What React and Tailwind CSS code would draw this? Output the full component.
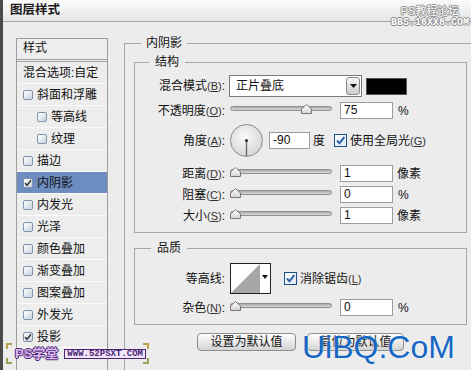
import React from 'react';

const layers = [
  { label: '混合选项:自定', box: false },
  { label: '斜面和浮雕', box: true },
  { label: '等高线', box: true, indent: true },
  { label: '纹理', box: true, indent: true },
  { label: '描边', box: true },
  { label: '内阴影', box: true, checked: true, active: true },
  { label: '内发光', box: true },
  { label: '光泽', box: true },
  { label: '颜色叠加', box: true },
  { label: '渐变叠加', box: true },
  { label: '图案叠加', box: true },
  { label: '外发光', box: true },
  { label: '投影', box: true, checked: true },
];

const ListBox = ({ checked }) => (
  <div className="w-[10px] h-[10px] shrink-0 rounded-[2px] border border-[#7f93ad] bg-linear-to-br from-[#ffffff] to-[#c9d3e0] flex items-center justify-center">
    {checked && (
      <svg width="8" height="8" viewBox="0 0 8 8">
        <path d="M1 4 L3 6.3 L7 1.2" fill="none" stroke="#333" strokeWidth="1.4" />
      </svg>
    )}
  </div>
);

const CheckBox = () => (
  <div className="w-[13px] h-[13px] shrink-0 border border-[#1c4f87] bg-linear-to-br from-[#ffffff] to-[#dfe5ee] flex items-center justify-center">
    <svg width="11" height="11" viewBox="0 0 11 11">
      <path d="M2 5.5 L4.5 8.3 L9.3 2.2" fill="none" stroke="#2a5fae" strokeWidth="2" />
    </svg>
  </div>
);

const Label = ({ text, k }) => (
  <div className="w-[90px] shrink-0 text-right whitespace-nowrap leading-[14px]">
    {text}
    {k && (
      <span className="text-[11px] text-[#333]">
        (<span className="underline">{k}</span>)
      </span>
    )}
    :
  </div>
);

const Slider = ({ pct }) => (
  <div className="relative ml-[5px] w-[102px] h-[17px] shrink-0">
    <div className="mt-[4px] h-[5px] rounded-full border border-[#8f8f8f] bg-linear-to-b from-[#a9a9a9] to-[#dadada]" />
    <svg
      className="absolute top-[2px]"
      style={{ left: Math.round(pct * 0.95) + 'px' }}
      width="11"
      height="10"
      viewBox="0 0 11 10"
    >
      <defs>
        <linearGradient id="th" x1="0" y1="0" x2="0" y2="1">
          <stop offset="0" stopColor="#ffffff" />
          <stop offset="1" stopColor="#d4d4d4" />
        </linearGradient>
      </defs>
      <path d="M5.5 0.5 L10.5 5 L10.5 9.5 L0.5 9.5 L0.5 5 Z" fill="url(#th)" stroke="#777" />
    </svg>
  </div>
);

const Field = ({ value, w = 'w-[53px]', ml = 'ml-[8px]' }) => (
  <div className={`${w} ${ml} h-[17px] shrink-0 border border-[#9c9c9c] bg-white pl-[3px] leading-[15px] text-[#111]`}>
    {value}
  </div>
);

const Row = ({ className, children }) => (
  <div className={`flex items-center ${className}`}>{children}</div>
);

export default function App() {
  return (
    <div className="relative w-[471px] h-[370px] overflow-hidden bg-[#ececec] border-l-[3px] border-[#4a4a4a] font-['Liberation_Sans','Noto_Sans_CJK_SC',sans-serif] text-[12px] text-[#111]">
      <div className="h-[22px] border-b border-[#a6a6a6] bg-linear-to-b from-[#fbfbfb] to-[#e6e6e6] pl-[7px] flex items-center font-bold text-[12.5px] text-[#1a1a1a]">
        图层样式
      </div>

      <div className="flex items-start">
        <div className="ml-[13px] mt-[16px] w-[92px] h-[340px] shrink-0 border border-[#9c9c9c] bg-[#ededed]">
          <div className="h-[23px] pl-[6px] pt-[1px] leading-[16px] border-b-[3px] border-double border-[#a3a3a3]">样式</div>
          {layers.map((l) => (
            <div
              key={l.label}
              className={`h-[22px] flex items-center border-b border-[#fafafa] whitespace-nowrap ${l.active ? 'bg-[#6d8dc0]' : ''}`}
            >
              {l.box ? (
                <>
                  <div className={l.indent ? 'ml-[20px]' : 'ml-[6px]'}>
                    <ListBox checked={l.checked} />
                  </div>
                  <span className="ml-[4px] leading-[14px]">{l.label}</span>
                </>
              ) : (
                <span className="ml-[6px] leading-[14px]">{l.label}</span>
              )}
            </div>
          ))}
        </div>

        <fieldset className="ml-[16px] mt-[14px] w-[355px] shrink-0 border border-[#a6a6a6] pl-[9px] pt-[5px] pb-[40px] min-w-0">
          <legend className="ml-[7px] px-[5px] leading-[14px]">内阴影</legend>

          <fieldset className="w-[333px] border border-[#a6a6a6] pb-[8px] min-w-0">
            <legend className="ml-[14px] px-[6px] leading-[14px]">结构</legend>

            <Row className="mt-[6px] h-[22px]">
              <Label text="混合模式" k="B" />
              <div className="ml-[4px] w-[133px] h-[22px] shrink-0 border border-[#7a7a7a] bg-white flex items-center">
                <span className="flex-1 pl-[6px] leading-[14px]">正片叠底</span>
                <div className="mr-[1px] w-[14px] h-[18px] rounded-[3px] border border-[#8a8a8a] bg-linear-to-b from-[#f6f6f6] to-[#cdcdcd] flex items-center justify-center">
                  <svg width="7" height="4" viewBox="0 0 7 4">
                    <path d="M0 0 L7 0 L3.5 4 Z" fill="#111" />
                  </svg>
                </div>
              </div>
              <div className="ml-[4px] w-[41px] h-[17px] bg-black border border-[#555]" />
            </Row>

            <Row className="mt-[5px] h-[17px]">
              <Label text="不透明度" k="O" />
              <Slider pct={75} />
              <Field value="75" />
              <span className="ml-[5px] leading-[14px]">%</span>
            </Row>

            <Row className="mt-[5px] h-[33px]">
              <Label text="角度" k="A" />
              <svg className="ml-[5px] shrink-0" width="33" height="33" viewBox="0 0 33 33">
                <defs>
                  <radialGradient id="dial" cx="0.45" cy="0.4" r="0.6">
                    <stop offset="0" stopColor="#fbfbfb" />
                    <stop offset="1" stopColor="#d6d6d6" />
                  </radialGradient>
                </defs>
                <circle cx="16.5" cy="16.5" r="16" fill="url(#dial)" stroke="#8a8a8a" />
                <line x1="16.5" y1="16.5" x2="16.5" y2="32" stroke="#6a6a6a" strokeWidth="1.4" />
                <circle cx="16.5" cy="16.5" r="1.6" fill="#333" />
              </svg>
              <Field value="-90" w="w-[41px]" ml="ml-[6px]" />
              <span className="ml-[3px] leading-[14px]">度</span>
              <div className="ml-[9px]">
                <CheckBox />
              </div>
              <span className="ml-[3px] leading-[14px] whitespace-nowrap">
                使用全局光
                <span className="text-[11px] text-[#333]">
                  (<span className="underline">G</span>)
                </span>
              </span>
            </Row>

            <Row className="mt-[8px] h-[17px]">
              <Label text="距离" k="D" />
              <Slider pct={0} />
              <Field value="1" />
              <span className="ml-[4px] leading-[14px]">像素</span>
            </Row>

            <Row className="mt-[4px] h-[17px]">
              <Label text="阻塞" k="C" />
              <Slider pct={0} />
              <Field value="0" />
              <span className="ml-[5px] leading-[14px]">%</span>
            </Row>

            <Row className="mt-[4px] h-[17px]">
              <Label text="大小" k="S" />
              <Slider pct={0} />
              <Field value="1" />
              <span className="ml-[4px] leading-[14px]">像素</span>
            </Row>
          </fieldset>

          <fieldset className="mt-[8px] w-[333px] border border-[#a6a6a6] pb-[8px] min-w-0">
            <legend className="ml-[16px] px-[6px] leading-[14px]">品质</legend>

            <Row className="mt-[8px] h-[31px]">
              <Label text="等高线" />
              <div className="ml-[5px] w-[41px] h-[31px] shrink-0 border border-[#222] bg-white flex">
                <svg width="29" height="29" viewBox="0 0 29 29">
                  <polygon points="0,29 29,0 29,29" fill="#a6a6a6" />
                </svg>
                <div className="flex-1 flex justify-center pt-[11px]">
                  <svg width="6" height="4" viewBox="0 0 6 4">
                    <path d="M0 0 L6 0 L3 4 Z" fill="#111" />
                  </svg>
                </div>
              </div>
              <div className="ml-[13px]">
                <CheckBox />
              </div>
              <span className="ml-[3px] leading-[14px] whitespace-nowrap">
                消除锯齿
                <span className="text-[11px] text-[#333]">
                  (<span className="underline">L</span>)
                </span>
              </span>
            </Row>

            <Row className="mt-[5px] h-[17px]">
              <Label text="杂色" k="N" />
              <Slider pct={0} />
              <Field value="0" />
              <span className="ml-[5px] leading-[14px]">%</span>
            </Row>
          </fieldset>

          <div className="mt-[8px] flex">
            <div className="ml-[63px] w-[99px] h-[18px] rounded-[4px] border border-[#8e8e8e] bg-linear-to-b from-[#ffffff] to-[#d4d4d4] flex items-center justify-center leading-[14px]">
              设置为默认值
            </div>
            <div className="ml-[11px] w-[97px] h-[18px] rounded-[4px] border border-[#8e8e8e] bg-linear-to-b from-[#ffffff] to-[#d4d4d4] flex items-center justify-center leading-[14px]">
              复位为默认值
            </div>
          </div>
        </fieldset>
      </div>

      {/* watermarks */}
      <div className="absolute top-[6px] left-[384px] w-[86px] flex flex-col items-center leading-[11px] text-white [text-shadow:1px_0_#8a8a8a,-1px_0_#8a8a8a,0_1px_#8a8a8a,0_-1px_#8a8a8a]">
        <span className="text-[11px]">PS教程论坛</span>
        <span className="text-[10px] font-['Liberation_Mono',monospace] font-bold">BBS.16XX8.COM</span>
      </div>

      <div className="absolute left-[299px] top-[331px] text-[32px] leading-none text-[#1767c4] font-['Liberation_Sans',sans-serif] whitespace-nowrap [text-shadow:0_0_2px_#fff]">
        UiBQ.CoM
      </div>

      <div className="absolute left-[3px] top-[343px] w-[143px] h-[21px]">
        <div className="absolute left-0 top-0 w-[6px] h-[6px] border-l-2 border-t-2 border-[#b8a24a]" />
        <div className="absolute left-0 bottom-0 w-[6px] h-[6px] border-l-2 border-b-2 border-[#8fa65a]" />
        <div className="absolute right-0 top-0 w-[6px] h-[6px] border-r-2 border-t-2 border-[#b8a24a]" />
        <div className="absolute right-0 bottom-0 w-[6px] h-[6px] border-r-2 border-b-2 border-[#8fa65a]" />
        <div className="flex items-center h-full pl-[9px]">
          <span className="text-[13px] font-bold leading-none text-[#d9bdf0] [text-shadow:1px_0_#4e2474,-1px_0_#4e2474,0_1px_#4e2474,0_-1px_#4e2474]">
            PS学堂
          </span>
          <span className="ml-[6px] px-[2px] border border-[#4e2474] bg-[#efe4f8] text-[#4e2474] text-[9px] font-bold leading-[8px] font-['Liberation_Mono',monospace]">
            WWW.52PSXT.COM
          </span>
        </div>
      </div>
    </div>
  );
}
